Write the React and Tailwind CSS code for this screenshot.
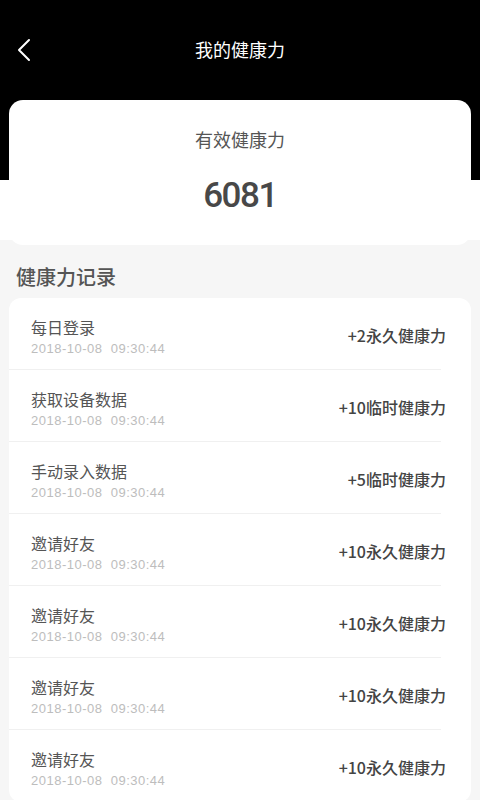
import React from "react";

const rows = [
  { t: "每日登录", v: "+2永久健康力" },
  { t: "获取设备数据", v: "+10临时健康力" },
  { t: "手动录入数据", v: "+5临时健康力" },
  { t: "邀请好友", v: "+10永久健康力" },
  { t: "邀请好友", v: "+10永久健康力" },
  { t: "邀请好友", v: "+10永久健康力" },
  { t: "邀请好友", v: "+10永久健康力" },
];

export default function App() {
  return (
    <div className="min-h-screen bg-[#f6f6f6] font-['Liberation_Sans','Noto_Sans_CJK_SC',sans-serif]">
      <div className="h-[180px] bg-black">
        <div className="grid h-[100px] grid-cols-[60px_1fr_60px] items-center">
          <div className="flex items-center pl-[17px]">
            <svg width="14" height="24" viewBox="0 0 14 24" fill="none">
              <path d="M12 2 L2 12 L12 22" stroke="white" strokeWidth="2" strokeLinecap="round" strokeLinejoin="round" />
            </svg>
          </div>
          <div className="pt-[2px] text-center text-[18px] leading-[24px] text-white">我的健康力</div>
          <div />
        </div>
      </div>
      <div className="h-[60px] bg-white" />
      <div className="relative mx-[9px] -mt-[140px] flex h-[145px] flex-col items-center rounded-[14px] bg-white">
        <div className="mt-[29px] text-[18px] leading-[24px] text-[#555]">有效健康力</div>
        <div className="mt-[19px] font-['Roboto',sans-serif] text-[35px] font-medium leading-[48px] tracking-[-1.5px] text-[#484848]">6081</div>
      </div>
      <div className="mt-[19px] px-[16px] text-[20px] font-medium leading-[28px] text-[#555]">健康力记录</div>
      <div className="mx-[9px] mt-[6px] overflow-hidden rounded-[12px] bg-white">
        {rows.map((r, i) => (
          <div key={i} className="border-b border-[#f0f0f0] mr-[30px]">
            <div className="-mr-[30px] flex h-[71px] items-center justify-between pl-[22px] pr-[25px]">
              <div className="flex flex-col pt-[7px]">
                <div className="text-[16px] leading-[22px] text-[#555]">{r.t}</div>
                <div className="mt-[1px] text-[13px] leading-[16px] tracking-[0.5px] text-[#bdbdbd] whitespace-pre">{"2018-10-08  09:30:44"}</div>
              </div>
              <div className="pt-[2px] font-['Noto_Sans_CJK_SC',sans-serif] text-[16px] font-medium leading-[22px] text-[#444]">{r.v}</div>
            </div>
          </div>
        ))}
      </div>
    </div>
  );
}
